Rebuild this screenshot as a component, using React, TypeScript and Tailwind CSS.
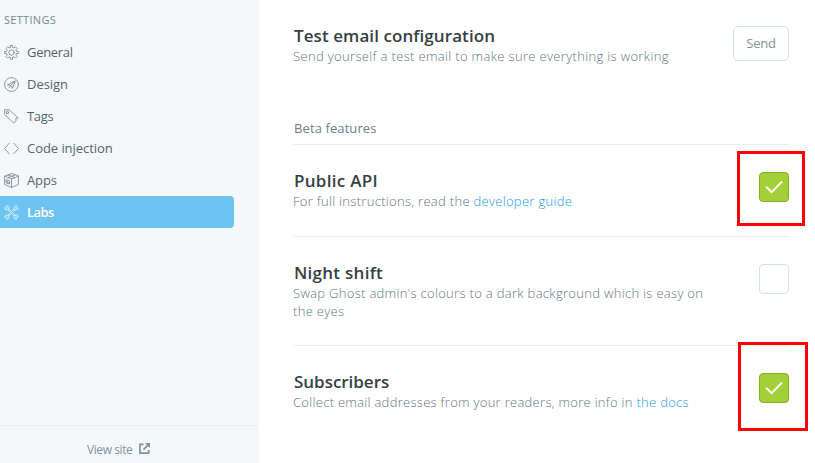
import type { ReactNode } from 'react';

function Icon({ children }: { children: ReactNode }) {
  return (
    <svg
      className="h-[15px] w-[15px] shrink-0 opacity-85"
      viewBox="0 0 16 16"
      fill="none"
      stroke="currentColor"
      strokeWidth="0.8"
      strokeLinecap="round"
      strokeLinejoin="round"
    >
      {children}
    </svg>
  );
}

const GearIcon = () => (
  <Icon>
    <circle cx="8" cy="8" r="2.9" />
    <path d="M6.9 .6h2.2v1.9l1.6.7 1.4-1.4 1.9 1.9-1.4 1.4.7 1.6h1.9v2.4h-1.9l-.7 1.6 1.4 1.4-1.9 1.9-1.4-1.4-1.6.7v1.9H6.9v-1.9l-1.6-.7-1.4 1.4L2 12.1l1.4-1.4-.7-1.6H.7V6.7h2l.7-1.6L2 3.7l1.9-1.9 1.4 1.4 1.6-.7z" />
  </Icon>
);

const CompassIcon = () => (
  <Icon>
    <circle cx="8" cy="8" r="7.4" />
    <path d="M11.7 4.4 3.7 8.4l3.6.5 1.4 3zM11.7 4.4 7.3 8.9l-1.8 2.4" />
  </Icon>
);

const TagIcon = () => (
  <Icon>
    <path d="M.7.9h5.1l9.3 8.8-2.5.4.2 2.4-2.4 2.5L.7 5.9z" />
    <rect x="2.8" y="2.8" width="2" height="2" />
  </Icon>
);

const CodeIcon = () => (
  <Icon>
    <path d="M5.5 2.4.6 8l4.9 5.6M10.5 2.4 15.4 8l-4.9 5.6" />
  </Icon>
);

const BoxIcon = () => (
  <Icon>
    <path d="M8 .7.6 3.4v8.8L8 15.4l7.4-3.2V3.4zM.6 3.4 8 6.3l7.4-2.9M8 6.3v9M4.4 2.1l7.3 2.8M11.7 2.2 4.3 4.9M2.6 7.1l3.2 1.2v3.4l-3.2-1.2zM2.8 8.9l1.5.6v1.3" />
  </Icon>
);

const ToolsIcon = () => (
  <Icon>
    <path d="m5 4 7.4 7.4M4 5l7.4 7.4M11 4 8.6 6.4M12 5 9.6 7.4M7.4 9.6 5 12M6.4 8.6 4 11" />
    <path d="M2.6.8A2.3 2.3 0 1 1 .8 2.8l1.4.7L3.4 2.6zM13.4.8a2.3 2.3 0 1 0 1.8 2l-1.4.7-1.2-.9zM2.6 15.2a2.3 2.3 0 1 0-1.8-2l1.4-.7 1.2.9zM13.4 15.2a2.3 2.3 0 1 1 1.8-2l-1.4-.7-1.2.9z" />
  </Icon>
);

const navItems = [
  { label: 'General', icon: <GearIcon />, tracking: 'tracking-[-0.3px]' },
  { label: 'Design', icon: <CompassIcon />, tracking: 'tracking-[-0.05px]' },
  { label: 'Tags', icon: <TagIcon />, tracking: 'tracking-[-0.3px]' },
  { label: 'Code injection', icon: <CodeIcon />, tracking: 'tracking-[-0.05px]' },
  { label: 'Apps', icon: <BoxIcon />, tracking: 'tracking-[-0.1px]' },
  { label: 'Labs', icon: <ToolsIcon />, tracking: 'tracking-[-0.6px] font-semibold', active: true },
];

function Sidebar() {
  return (
    <aside className="flex w-[259px] shrink-0 flex-col bg-[#f4f8fb]">
      <h2 className="h-9 pt-3 pl-1 text-[11px] leading-4 tracking-[0.3px] text-[#738a94]">SETTINGS</h2>
      <nav className="flex flex-1 flex-col">
        {navItems.map((item) => (
          <a
            key={item.label}
            className={`flex h-8 w-[234px] items-center gap-2 rounded-r-[4px] pt-px pl-1 text-[13px] ${
              item.active ? 'bg-[#6dc3f2] text-white' : 'text-[#54666d]'
            }`}
          >
            {item.icon}
            <span className={`pt-px ${item.tracking}`}>{item.label}</span>
          </a>
        ))}
      </nav>
      <footer className="flex h-[38px] items-center gap-[7px] border-t border-[#e5eff5] pt-[10px] pl-[87px] text-[12px] text-[#7d949e]">
        <span className="tracking-[-0.42px]">View site</span>
        <svg className="mb-[3px] h-[11px] w-[11px]" viewBox="0 0 11 11" fill="none" stroke="currentColor" strokeWidth="1.7">
          <path d="M4.5 1.3H.9v8.8h8.8V7M4.4 6.6 8.6 2.4" />
          <path d="M6 0h5v5z" fill="currentColor" stroke="none" />
        </svg>
      </footer>
    </aside>
  );
}

function Checkbox({ checked }: { checked?: boolean }) {
  return (
    <span
      className={`flex h-[30px] w-[30px] shrink-0 items-center justify-center rounded-[4px] border ${
        checked ? 'border-[#86ac2a] bg-[#a4d037]' : 'border-[#d3e2ea] bg-white'
      }`}
    >
      {checked && (
        <svg className="h-[14px] w-[18px]" viewBox="0 0 18 14" fill="none" stroke="white" strokeWidth="2">
          <path d="m1 6.6 5.6 5.6L17 1.6" />
        </svg>
      )}
    </span>
  );
}

function Setting({
  title,
  titleClass,
  textClass,
  children,
  control,
}: {
  title: string;
  titleClass: string;
  textClass: string;
  children: ReactNode;
  control: ReactNode;
}) {
  return (
    <div className="flex justify-between">
      <div>
        <h3 className={`h-[23px] pl-px text-[17px] leading-6 font-semibold whitespace-nowrap text-[#343f44] ${titleClass}`}>
          {title}
        </h3>
        <p className={`text-[13px] leading-[18px] font-light whitespace-nowrap text-[#5f7681] ${textClass}`}>{children}</p>
      </div>
      {control}
    </div>
  );
}

const Link = ({ children }: { children: string }) => <a className="text-[#1b98e6]">{children}</a>;

export default function App() {
  return (
    <div className="relative flex h-[463px] w-[815px] overflow-hidden bg-white font-['Open_Sans','Noto_Sans',sans-serif]">
      <Sidebar />
      <main className="ml-[34px] flex w-[496px] flex-col">
        <section className="h-[117px] pt-6">
          <Setting
            title="Test email configuration"
            titleClass="tracking-[0.08px]"
            textClass="tracking-[0.34px]"
            control={
              <button className="mt-[2px] h-[35px] w-14 rounded-[5px] border border-[#d3e2ea] pt-px text-[13px] tracking-[-0.2px] text-[#7d949e]">
                Send
              </button>
            }
          >
            Send yourself a test email to make sure everything is working
          </Setting>
        </section>
        <h2 className="h-7 border-b border-[#e5eff5] pt-[2px] pl-px text-[13px] leading-[18px] tracking-[0.1px] text-[#6b818c]">
          Beta features
        </h2>
        <section className="h-[92px] border-b border-[#e5eff5] pt-6">
          <Setting
            title="Public API"
            titleClass="tracking-[0.3px]"
            textClass="tracking-[0.3px]"
            control={<span className="mt-[3px]"><Checkbox checked /></span>}
          >
            For full instructions, read the <Link>developer guide</Link>
          </Setting>
        </section>
        <section className="h-[109px] border-b border-[#e5eff5] pt-6">
          <Setting
            title="Night shift"
            titleClass="tracking-[0.27px]"
            textClass="tracking-[0.31px]"
            control={<span className="mt-[3px]"><Checkbox /></span>}
          >
            Swap Ghost admin's colours to a dark background which is easy on
            <br />
            the eyes
          </Setting>
        </section>
        <section className="pt-6">
          <Setting
            title="Subscribers"
            titleClass="tracking-[-0.03px]"
            textClass="tracking-[0.29px]"
            control={<span className="mt-[3px]"><Checkbox checked /></span>}
          >
            Collect email addresses from your readers, more info in <Link>the docs</Link>
          </Setting>
        </section>
      </main>
      <div className="absolute top-[151px] left-[737px] h-[75px] w-[68px] border-3 border-[#ff0000]" />
      <div className="absolute top-[342px] left-[738px] h-[89px] w-[70px] border-3 border-[#ff0000]" />
    </div>
  );
}
